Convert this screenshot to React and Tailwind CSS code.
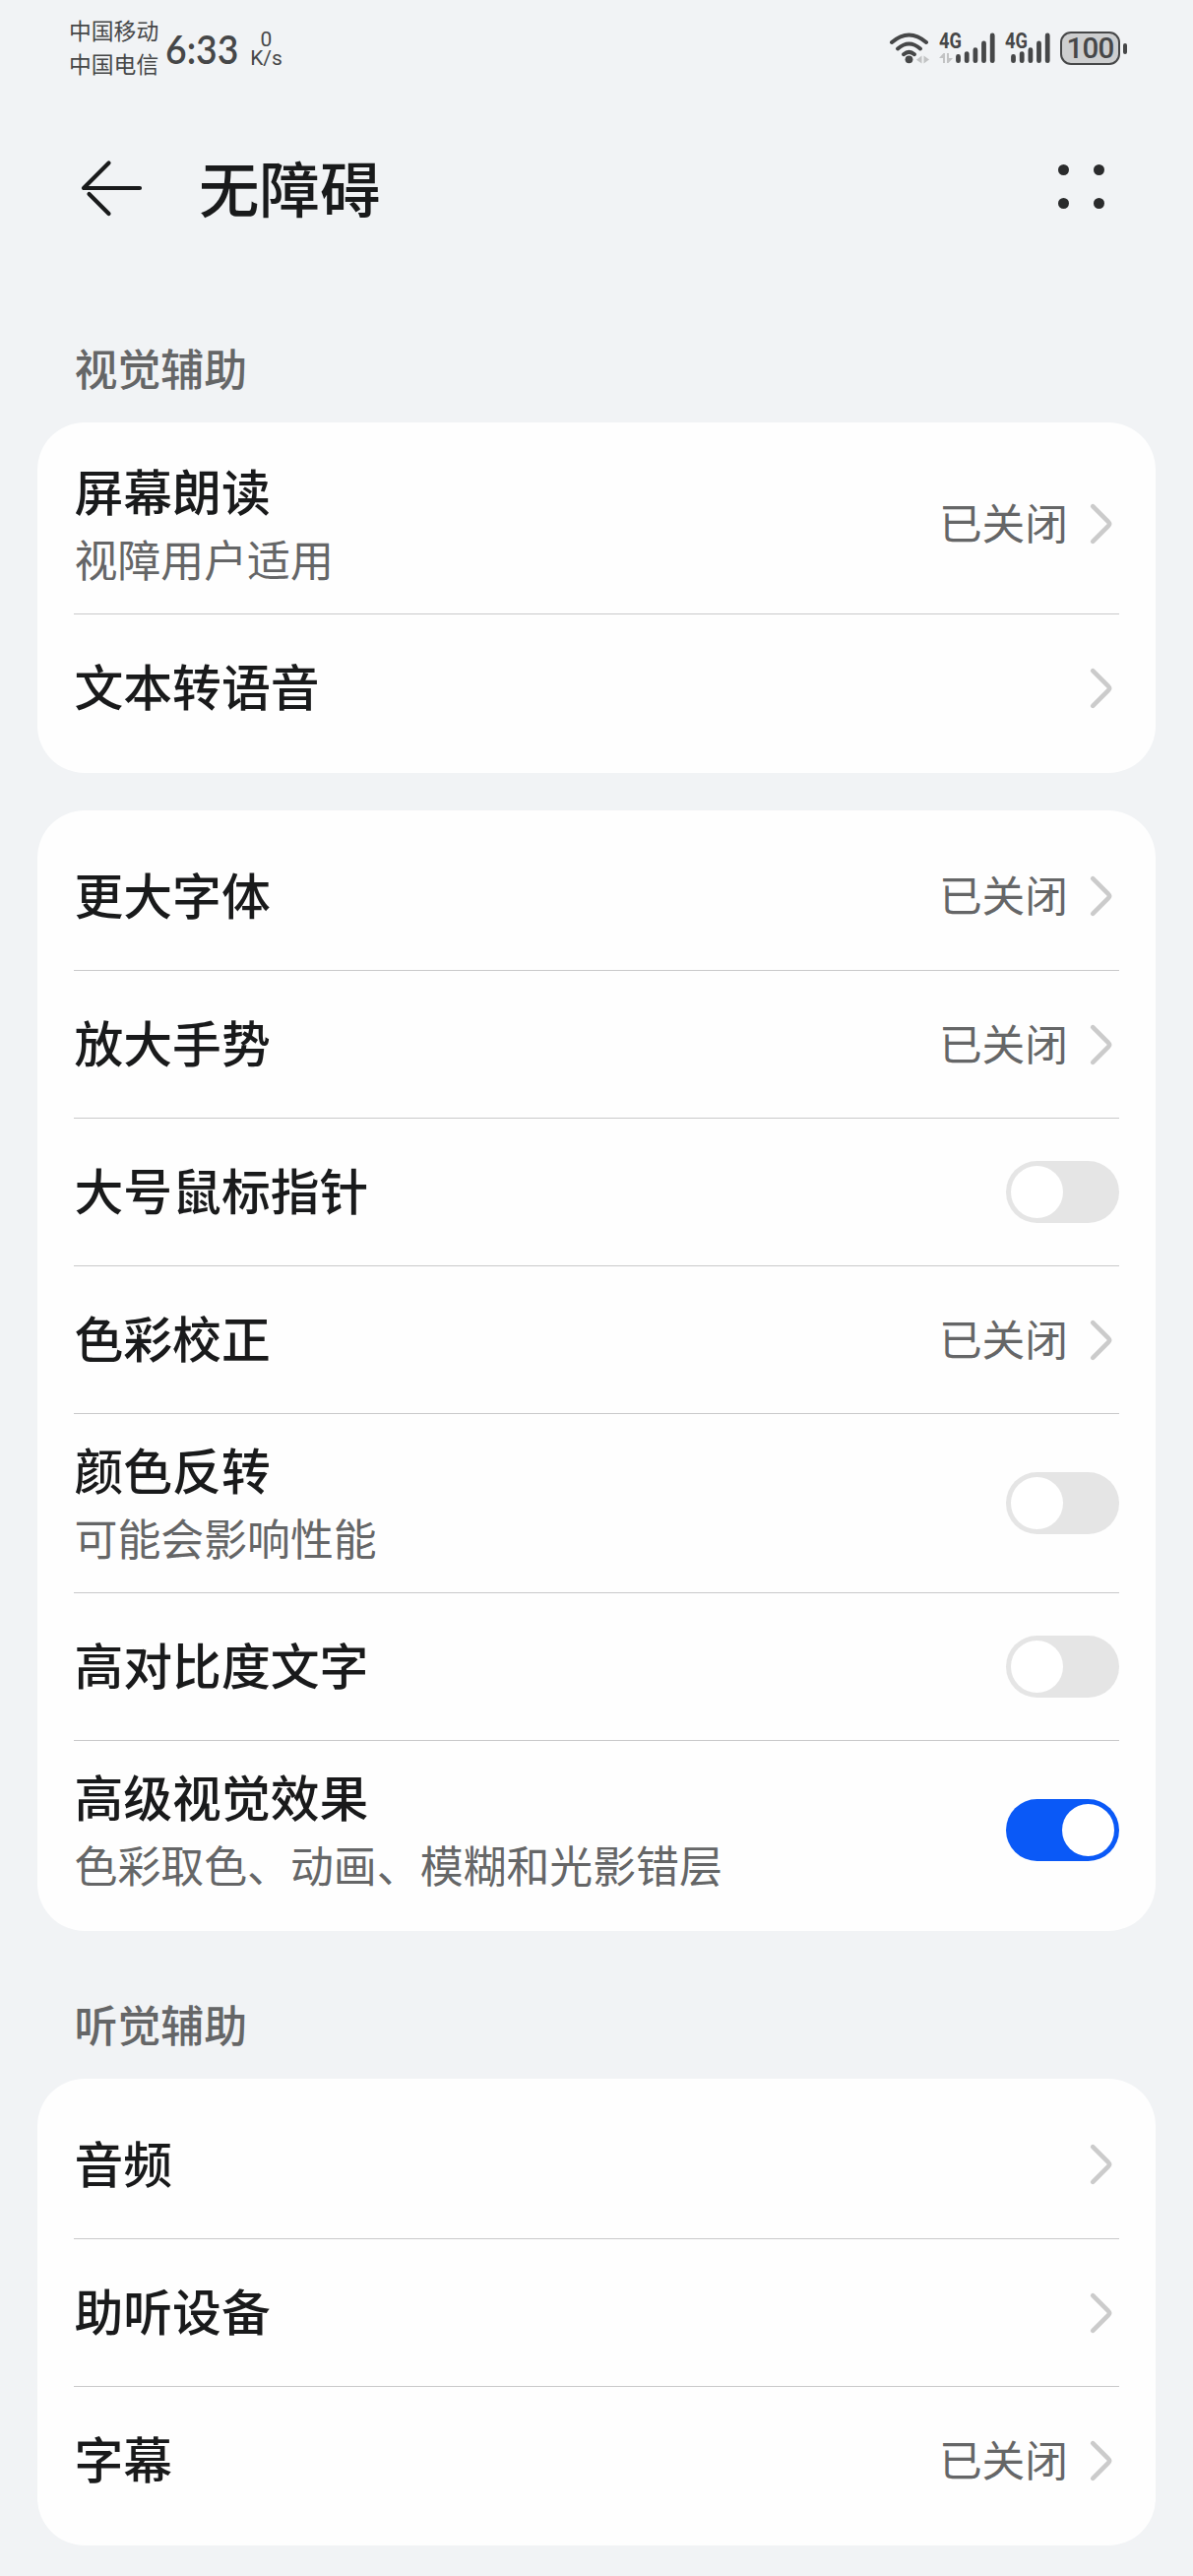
const CJK = "font-['Noto_Sans_CJK_SC',sans-serif]";

function Chevron() {
  return (
    <svg className="block h-[44px] w-[26px] shrink-0" viewBox="0 0 26 44" fill="none" stroke="#cbcbcb" strokeWidth="4.6" strokeLinecap="round" strokeLinejoin="round">
      <path d="M4.2 4.2 L20.2 20.2 Q22.2 22 20.2 23.8 L4.2 39.8" />
    </svg>
  );
}

function Switch({ on }) {
  return (
    <span className={`flex h-[63px] w-[115.5px] shrink-0 items-center rounded-full px-[5.5px] ${on ? "justify-end bg-[#0a59f7]" : "justify-start bg-[#e5e5e5]"}`}>
      <span className="h-[53px] w-[53px] rounded-full bg-white" />
    </span>
  );
}

function Row({ title, sub, value, toggle, first }) {
  return (
    <div className={`mx-[37px] flex items-center justify-between ${sub ? "h-[182px]" : "h-[150px]"} ${first ? "" : "border-t border-[#c9c9ca]"}`}>
      <div className={`flex flex-col pl-[0.5px] ${sub ? "pb-[3px]" : "pb-[7px]"}`}>
        <span className="text-[49.8px] leading-[66px] font-medium text-[#191a1b]">{title}</span>
        {sub && <span className="mt-[6px] text-[43.9px] leading-[62px] text-[#656667]">{sub}</span>}
      </div>
      {toggle !== undefined ? (
        <Switch on={toggle} />
      ) : (
        <div className="flex items-center gap-[21px] pr-[5px]">
          {value && <span className="pb-[6px] text-[43.7px] leading-[62px] text-[#656667]">{value}</span>}
          <Chevron />
        </div>
      )}
    </div>
  );
}

function Card({ rows }) {
  return (
    <section className="mx-[38px] rounded-[48px] bg-[#fefefe] py-[12px]">
      {rows.map((r, i) => (
        <Row key={r.title} first={i === 0} {...r} />
      ))}
    </section>
  );
}

function SectionTitle({ children }) {
  return <h2 className="pl-[75.5px] text-[43.9px] leading-[64px] font-medium text-[#656667]">{children}</h2>;
}

function Wifi() {
  return (
    <svg className="block h-[34px] w-[44px]" viewBox="0 0 44 34" fill="none" stroke="#464748" strokeWidth="4" strokeLinecap="round">
      <path d="M3 11 Q20.500 -4 38 11" />
      <path d="M9 17.500 Q20.500 7.500 32 17.500" />
      <path d="M15 23.200 Q20.500 18.500 26 23.200" />
      <circle cx="20.500" cy="28.300" r="3.900" fill="#464748" stroke="none" />
      <path d="M28 28.800 L33.500 24.500 V32.500 Z M35.500 24.500 L41 28.500 L35.500 32.500 Z" fill="#c2c3c4" stroke="none" />
    </svg>
  );
}

function Bars() {
  return (
    <svg className="block h-[34px] w-[40px]" viewBox="0 0 40 34" stroke="#464748" strokeWidth="4.800" strokeLinecap="round">
      <path d="M2.500 25.500 V29.700 M11.200 22.600 V29.700 M19.900 18.700 V29.700 M28.500 11.900 V29.700 M37.200 3.900 V29.700" />
    </svg>
  );
}

function Signal({ arrows }) {
  return (
    <span className={`relative flex h-[34px] justify-end ${arrows ? "w-[57px]" : "w-[46px]"}`}>
      <span className="absolute top-0 left-0 origin-left scale-x-[0.85] font-['Roboto',sans-serif] text-[21.5px] leading-[19px] font-bold">4G</span>
      {arrows && (
        <svg className="absolute bottom-0 left-0 block h-[14px] w-[14px]" viewBox="0 0 14 14" fill="#c2c3c4">
          <path d="M0 7 L4.500 2 H6 V12 H4 V7 Z M8 2 H10 V7 H14 L9.500 12 H8 Z" />
        </svg>
      )}
      <Bars />
    </span>
  );
}

function StatusBar() {
  return (
    <header className="flex h-[100px] items-start justify-between pr-[67px] pl-[70px] text-[#464748]">
      <div className="flex">
        <div className="w-[91px] pt-[14px] text-[22.8px] leading-[34px] whitespace-nowrap">
          <div>中国移动</div>
          <div>中国电信</div>
        </div>
        <span className="mt-[26px] ml-[7px] w-[76px] origin-left scale-x-[0.91] font-['Lato',sans-serif] text-[41px] leading-[48px] font-semibold whitespace-nowrap">6:33</span>
        <div className="mt-[31px] ml-[10px] w-[33px] text-center font-['Roboto',sans-serif] text-[21px] leading-[19px]">
          <div>0</div>
          <div>K/s</div>
        </div>
      </div>
      <div className="flex pt-[32px]">
        <Wifi />
        <span className="ml-[7px]"><Signal arrows /></span>
        <span className="ml-[10px]"><Signal /></span>
        <span className="ml-[10px] flex h-[34px] items-center gap-[3px]">
          <span className="flex h-[34px] w-[61px] items-center justify-center rounded-[11px] border-[2.5px] border-[#464748] bg-[#cdcecf] font-['Roboto',sans-serif] text-[29.5px] leading-[28px] font-medium tracking-[-0.8px]">100</span>
          <span className="h-[11px] w-[4px] rounded-full bg-[#464748]" />
        </span>
      </div>
    </header>
  );
}

export default function App() {
  return (
    <div className={`${CJK} h-[2616px] w-[1212px] overflow-hidden bg-[#f1f3f5]`}>
      <StatusBar />
      <div className="flex h-[184px] items-center pr-[90px] pb-[2px] pl-[80px]">
        <svg className="block h-[60px] w-[66px] shrink-0" viewBox="0 0 66 60" fill="none" stroke="#191a1b" strokeWidth="4.200" strokeLinecap="round" strokeLinejoin="round">
          <path d="M30.500 4.500 L5 30 H62 M10.500 36 L30.500 56" />
        </svg>
        <h1 className="ml-[56px] pb-[3px] text-[61.5px] leading-[80px] font-medium text-[#191a1b]">无障碍</h1>
        <div className="mb-[3px] ml-auto grid grid-cols-2 gap-x-[25px] gap-y-[23px]">
          {[0, 1, 2, 3].map((i) => (
            <span key={i} className="h-[11px] w-[11px] rounded-full bg-[#2a2b2c]" />
          ))}
        </div>
      </div>
      <div className="mt-[57px]">
        <SectionTitle>视觉辅助</SectionTitle>
      </div>
      <div className="mt-[24px]">
        <Card rows={[{ title: "屏幕朗读", sub: "视障用户适用", value: "已关闭" }, { title: "文本转语音" }]} />
      </div>
      <div className="mt-[38px]">
        <Card
          rows={[
            { title: "更大字体", value: "已关闭" },
            { title: "放大手势", value: "已关闭" },
            { title: "大号鼠标指针", toggle: false },
            { title: "色彩校正", value: "已关闭" },
            { title: "颜色反转", sub: "可能会影响性能", toggle: false },
            { title: "高对比度文字", toggle: false },
            { title: "高级视觉效果", sub: "色彩取色、动画、模糊和光影错层", toggle: true },
          ]}
        />
      </div>
      <div className="mt-[62px]">
        <SectionTitle>听觉辅助</SectionTitle>
      </div>
      <div className="mt-[24px]">
        <Card rows={[{ title: "音频" }, { title: "助听设备" }, { title: "字幕", value: "已关闭" }]} />
      </div>
    </div>
  );
}
